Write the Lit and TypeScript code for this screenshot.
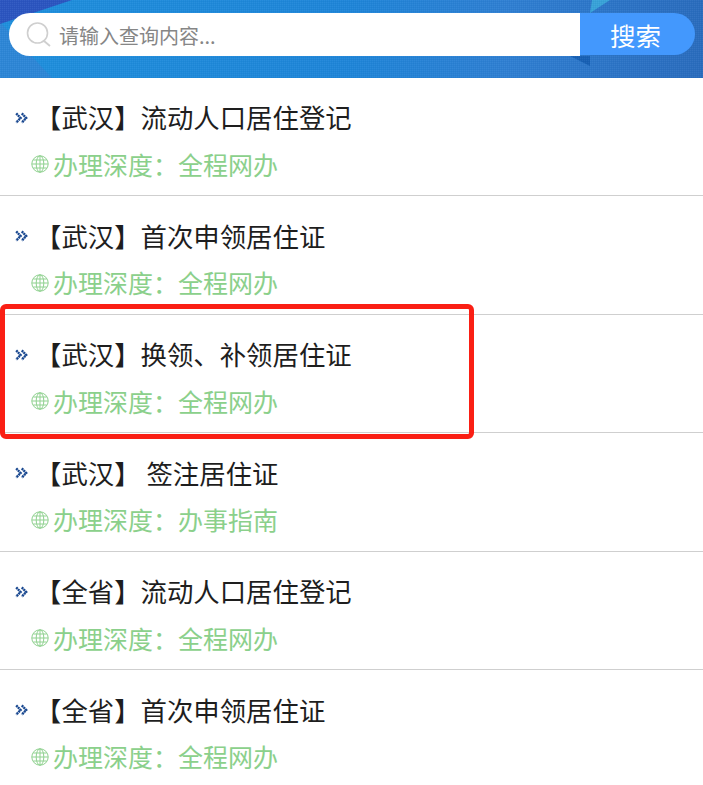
import { LitElement, html, css, svg } from "lit";
import { customElement } from "lit/decorators.js";

const ROWS = [
  { t: "【武汉】流动人口居住登记", d: "全程网办" },
  { t: "【武汉】首次申领居住证", d: "全程网办" },
  { t: "【武汉】换领、补领居住证", d: "全程网办" },
  { t: "【武汉】 签注居住证", d: "办事指南" },
  { t: "【全省】流动人口居住登记", d: "全程网办" },
  { t: "【全省】首次申领居住证", d: "全程网办" },
];

const chevrons = svg`<svg class="chev" viewBox="0 0 13 12" width="13" height="12">
  <path d="M1.2 1.4 5.6 6 1.2 10.6M6.8 1.4 11.2 6 6.8 10.6" fill="none" stroke="#17468f" stroke-width="2.4" stroke-dasharray="2 .5"/>
</svg>`;

const globe = svg`<svg class="globe" viewBox="0 0 18 18" width="18" height="18" fill="none" stroke="#8fd18f" stroke-width="1">
  <circle cx="9" cy="9" r="8.2"/><ellipse cx="9" cy="9" rx="3.8" ry="8.2"/>
  <path d="M9 .8v16.4M.9 9h16.2M2.2 5h13.6M2.2 13h13.6"/>
</svg>`;

@customElement("app-root")
export class AppRoot extends LitElement {
  static styles = css`
    :host {
      display: block;
      width: 703px;
      height: 785px;
      overflow: hidden;
      background: #fff;
      font-family: "Noto Sans CJK SC", "Liberation Sans", sans-serif;
      position: relative;
    }
    .head {
      position: relative;
      height: 78px;
      box-sizing: border-box;
      padding: 13px 8px 0 9px;
      overflow: hidden;
      background: #2183d6;
    }
    .art {
      position: absolute;
      inset: 0;
    }
    .search {
      position: relative;
      display: flex;
      align-items: flex-start;
    }
    .box {
      flex: 1;
      height: 43px;
      background: #fff;
      border-radius: 21px 0 0 21px;
      display: flex;
      align-items: center;
      padding-left: 17px;
      gap: 7px;
      color: #868686;
      font-size: 20px;
    }
    .box span {
      padding-top: 1px;
    }
    .btn {
      width: 115px;
      height: 42px;
      box-sizing: border-box;
      padding-right: 4px;
      background: #4398fd;
      border-radius: 0 21px 21px 0;
      color: #fff;
      font-size: 25.5px;
      display: flex;
      align-items: center;
      justify-content: center;
    }
    .list {
      margin-top: -0.5px;
    }
    .row {
      height: 118.5px;
      box-sizing: border-box;
      border-bottom: 1px solid #cfcfcf;
      padding: 21px 0 0 15px;
    }
    .title {
      display: flex;
      align-items: center;
      height: 36px;
      font-size: 26.4px;
      color: #1e1e1e;
      white-space: pre;
    }
    .chev {
      flex: none;
      margin-right: 7px;
      margin-top: 2px;
    }
    .sub {
      display: flex;
      align-items: center;
      height: 36px;
      margin-top: 11px;
      padding-left: 16px;
      font-size: 25px;
      color: #8bd08b;
      gap: 4px;
    }
    .globe {
      margin-top: 1px;
    }
    .mark {
      position: absolute;
      left: 0;
      top: 304px;
      width: 474px;
      height: 135px;
      box-sizing: border-box;
      border: 5px solid #fa1f14;
      border-radius: 6px;
      pointer-events: none;
    }
  `;

  render() {
    return html`
      <div class="head">
        <svg class="art" width="703" height="78" viewBox="0 0 703 78">
          <defs>
            <linearGradient id="g" x1="0" x2="1" y1="0" y2="0">
              <stop offset="0" stop-color="#1f8fdc" />
              <stop offset=".5" stop-color="#1f85d8" />
              <stop offset=".72" stop-color="#2f7fd2" />
              <stop offset="1" stop-color="#2a6cbd" />
            </linearGradient>
            <pattern id="dots" width="2" height="2" patternUnits="userSpaceOnUse">
              <rect width="1" height="1" fill="#fff" opacity=".05" />
              <rect x="1" y="1" width="1" height="1" fill="#000" opacity=".03" />
            </pattern>
          </defs>
          <rect width="703" height="78" fill="url(#g)" />
          <path d="M0 22 52 78H0Z" fill="#2d86d6" />
          <path d="M0 0H72L0 24Z" fill="#2b55c0" />
          <path d="M590 56 590 66 570 56Z" fill="#1760b4" />
          <path d="M592 0H610L590 13Z" fill="#38a2d8" />
          <rect width="703" height="78" fill="url(#dots)" />
        </svg>
        <div class="search">
          <div class="box">
            <svg width="26" height="26" viewBox="0 0 26 26" fill="none" stroke="#cfcfcf" stroke-width="1.6">
              <circle cx="11.5" cy="11" r="10" />
              <path d="M18 19l6 5" stroke-width="1.8" />
            </svg>
            <span>请输入查询内容...</span>
          </div>
          <div class="btn">搜索</div>
        </div>
      </div>
      <div class="list">
        ${ROWS.map(
          (r) => html`<div class="row">
            <div class="title">${chevrons}<span>${r.t}</span></div>
            <div class="sub">${globe}<span>办理深度：${r.d}</span></div>
          </div>`
        )}
      </div>
      <div class="mark"></div>
    `;
  }
}
